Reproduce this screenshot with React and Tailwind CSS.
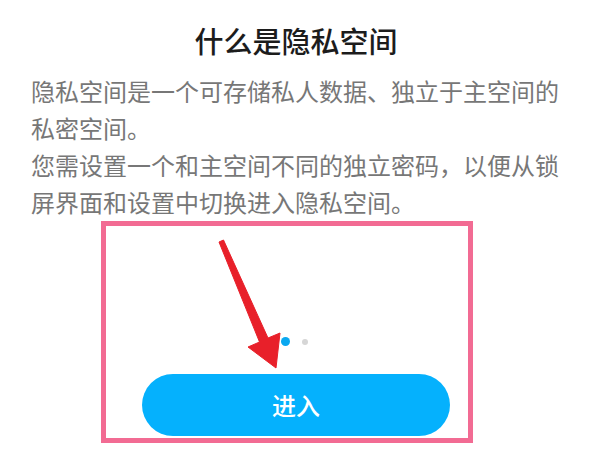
const cjk = { fontFamily: '"Noto Sans CJK SC", "Noto Sans", sans-serif' };

const App = () => {
  return (
    <div className="relative w-[600px] h-[450px] bg-white overflow-hidden" style={cjk}>
      {/* Title */}
      <h1 className="mt-[22px] text-center pr-[8px] text-[29px] leading-[36px] font-medium text-[#1c1c1c]">
        什么是隐私空间
      </h1>

      {/* Description */}
      <div className="mt-[14px] pl-[31px] text-[24px] leading-[37px] text-[#777777] whitespace-nowrap">
        <p>隐私空间是一个可存储私人数据、独立于主空间的</p>
        <p>私密空间。</p>
        <p>您需设置一个和主空间不同的独立密码，以便从锁</p>
        <p>屏界面和设置中切换进入隐私空间。</p>
      </div>

      {/* Highlighted area */}
      <div className="mt-[1px] ml-[101px] w-[372px] h-[222px] border-[5px] border-[#f26b93] flex flex-col">
        <div className="pt-[111px] pl-[175px] flex items-center gap-[12px]">
          <span className="w-[9px] h-[9px] rounded-full bg-[#0aa8f0]" />
          <span className="w-[6px] h-[6px] rounded-full bg-[#d6d6d6]" />
        </div>
        <button className="mt-[28px] ml-[36px] w-[308px] h-[62px] rounded-full bg-[#05b1fd] text-white text-[24px] font-medium">
          进入
        </button>
      </div>

      {/* Red annotation arrow */}
      <svg className="absolute left-0 top-0 pointer-events-none" width="600" height="450" viewBox="0 0 600 450">
        <polygon
          points="219,242 223.5,240 268,338 280,333 276,368 248,347 259.5,342"
          fill="#e8202a"
          stroke="#e8202a"
          strokeWidth="1"
          strokeLinejoin="round"
        />
      </svg>
    </div>
  );
};

export default App;
